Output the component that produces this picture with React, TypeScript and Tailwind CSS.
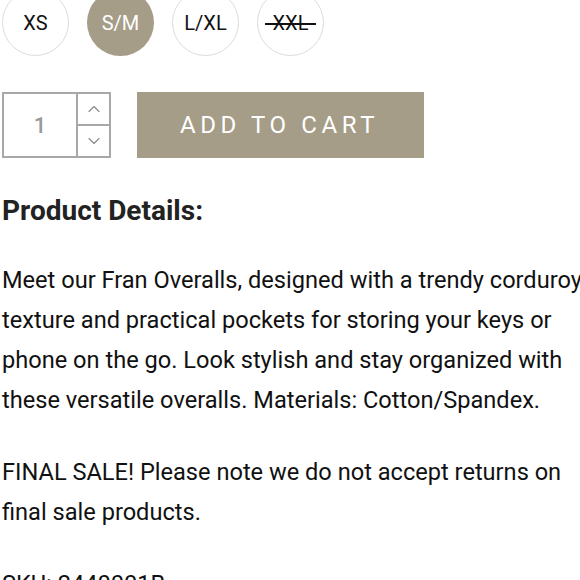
import { ChevronUp, ChevronDown } from "lucide-react";

const sizes = [
  { label: "XS", active: false, soldOut: false },
  { label: "S/M", active: true, soldOut: false },
  { label: "L/XL", active: false, soldOut: false },
  { label: "XXL", active: false, soldOut: true },
];

export default function App() {
  return (
    <div className="w-[580px] h-[580px] overflow-hidden bg-white text-[#1a1a1a]" style={{ fontFamily: "Roboto, 'Liberation Sans', sans-serif" }}>
      {/* size options */}
      <div className="flex gap-[18px] pl-[2px] -mt-[11px]">
        {sizes.map((s) => (
          <div
            key={s.label}
            className={`w-[67px] h-[67px] rounded-full flex items-center justify-center text-[20px] ${
              s.active ? "bg-[#a59d88] text-white" : "border border-[#dcdcdc] text-[#111]"
            }`}
          >
            <span className={s.soldOut ? "relative" : ""}>
              {s.label}
              {s.soldOut && (
                <span className="absolute left-[-8px] right-[-8px] top-1/2 h-[2px] bg-[#111]" />
              )}
            </span>
          </div>
        ))}
      </div>

      {/* quantity + add to cart */}
      <div className="flex items-start mt-[36px] pl-[2px]">
        <div className="flex w-[109px] h-[66px] border-2 border-[#a8a8a8]">
          <div className="w-[74px] flex items-center justify-center text-[22px] font-medium text-[#9a9a9a] border-r-2 border-[#a8a8a8]">
            1
          </div>
          <div className="flex-1 flex flex-col">
            <div className="flex-1 flex items-center justify-center border-b-2 border-[#a8a8a8]">
              <ChevronUp size={20} strokeWidth={1.3} className="text-[#888]" />
            </div>
            <div className="flex-1 flex items-center justify-center">
              <ChevronDown size={20} strokeWidth={1.3} className="text-[#888]" />
            </div>
          </div>
        </div>
        <button className="ml-[26px] w-[287px] h-[66px] bg-[#a59d88] text-white text-[24px] tracking-[4.6px] pr-[2px]">
          ADD TO CART
        </button>
      </div>

      {/* details */}
      <h2 className="mt-[36px] pl-[2px] text-[28px] leading-[34px] font-bold text-[#222]">Product Details:</h2>
      <div className="mt-[32px] pl-[2px] text-[23.6px] leading-[40px] text-[#111] whitespace-nowrap">
        <p>Meet our Fran Overalls, designed with a trendy corduroy</p>
        <p>texture and practical pockets for storing your keys or</p>
        <p>phone on the go. Look stylish and stay organized with</p>
        <p>these versatile overalls. Materials: Cotton/Spandex.</p>
        <p className="mt-[32px]">FINAL SALE! Please note we do not accept returns on</p>
        <p>final sale products.</p>
        <p className="mt-[32px]">SKU: 2440001B</p>
      </div>
    </div>
  );
}
